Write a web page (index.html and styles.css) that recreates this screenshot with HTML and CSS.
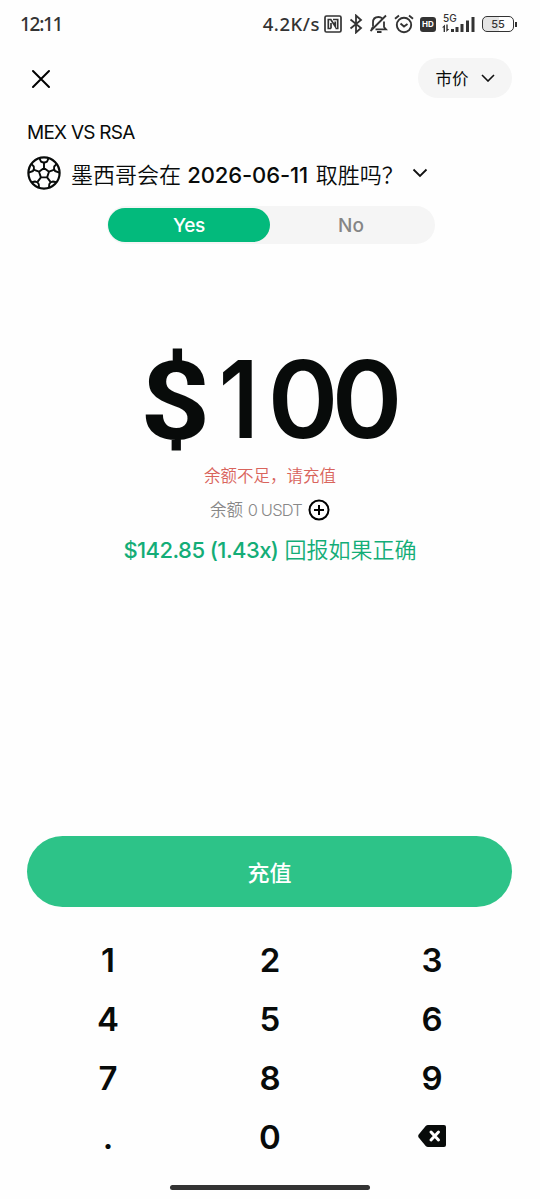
FILE: index.html
```html
<!DOCTYPE html>
<html lang="zh-CN">
<head>
<meta charset="utf-8">
<meta name="viewport" content="width=device-width">
<title>MEX VS RSA</title>
<link rel="stylesheet" href="styles.css">
</head>
<body>
<main class="screen">
  <header class="status">
    <span class="clock">12:11</span>
    <div class="indicators">
      <span class="speed">4.2K/s</span>
      <svg class="nfc" width="18" height="18" viewBox="0 0 18 18" fill="none" stroke="#333" stroke-width="1.7"><rect x="1" y="1" width="16" height="16" rx="1.500"/><path d="M7 13.500H4.300V4.500h2.500l4.400 6.800V6.500M7 8v5.500M9 4.500h4.700v9h-2.200"/></svg>
      <svg class="bt" width="14" height="20" viewBox="0 0 14 20" fill="none" stroke="#333" stroke-width="1.8"><path d="M1.500 5.500l10.500 8.500-5 4.500V1.500l5 4.500L1.500 14.500"/></svg>
      <svg class="mute" width="19" height="20" viewBox="0 0 19 20" fill="none" stroke="#333" stroke-width="1.8"><path d="M1.500 17L17 1.500M4 12.500V8.500C4 5 6 3 9.500 3c1.700 0 2.800.5 3.700 1.400M15 7.500v5.500l2 2.300H6.500M4 13l-1.500 2M8 18h4.500"/></svg>
      <svg class="alarm" width="20" height="20" viewBox="0 0 20 20" fill="none" stroke="#333" stroke-width="1.9"><circle cx="10" cy="11" r="7.200"/><path d="M1 4.700L5 1.500M19 4.700l-4-3.200M6.500 9.500L10 12.500l3.500-2.500"/></svg>
      <span class="hd">HD</span>
      <svg class="signal" width="34" height="20" viewBox="0 0 34 20" fill="#333"><text class="net" x="1" y="8">5G</text><path d="M0 13.500L3 10.500V18H1.600v-4.500zM4.300 10.500h1.400V15h1.600l-3 3zM9 15h3v3H9zM13.500 13h3v5h-3zM18.500 10h3v8h-3zM24 6.500h3V18h-3zM29.500 3h3v15h-3z"/></svg>
      <span class="battery"><b>55</b></span><i class="tip"></i>
    </div>
  </header>

  <nav class="top">
    <svg class="close" width="20" height="20" viewBox="0 0 20 20" fill="none" stroke="#000" stroke-width="2" stroke-linecap="round"><path d="M2 2l16 16M18 2L2 18"/></svg>
    <button class="order">市价<svg width="14" height="8" viewBox="0 0 14 8" fill="none" stroke="#111" stroke-width="1.600"><path d="M1 1l6 6 6-6"/></svg></button>
  </nav>

  <h2 class="match">MEX VS RSA</h2>
  <div class="question">
    <svg class="ball" width="34" height="34" viewBox="0 0 34 34" fill="none" stroke="#080b0a" stroke-width="1.900" stroke-linejoin="round"><circle cx="17" cy="17" r="15.600" stroke-width="2.200"/><path d="M17 12l5 3.700-1.900 5.700h-6.200L12 15.700zM17 12V6.500M22 15.700l5.500-2M20.100 21.400l3.400 4.500M13.900 21.400l-3.400 4.500M12 15.700l-5.500-2"/><path d="M12.500 2.400L14 5.700Q17 7.200 20 5.700L21.500 2.400M29.500 8.200l-2.300 2.300q-.7 2.300.800 4.500l4.300 1.700M29.200 26.200l-3.200-.7q-2.800.3-3.700 2.500L22 31.500M4.500 8.200l2.300 2.300q.7 2.300-.8 4.500l-4.300 1.700M4.800 26.200l3.200-.7q2.800.3 3.700 2.500l.3 3.500"/></svg>
    <h1>墨西哥会在 <span class="date">2026-06-11</span> 取胜吗？</h1>
    <svg class="chev" width="16" height="10" viewBox="0 0 16 10" fill="none" stroke="#111" stroke-width="1.800"><path d="M1.500 1.500L8 8l6.500-6.500"/></svg>
  </div>
  <div class="toggle"><button class="yes">Yes</button><button class="no">No</button></div>

  <section class="summary">
    <div class="amount"><span class="dollar">$</span><span class="one">1</span><span>0</span><span>0</span></div>
    <p class="error">余额不足，请充值</p>
    <div class="balance"><span>余额 <span class="usdt">0 USDT</span></span><svg width="22" height="22" viewBox="0 0 22 22" fill="none" stroke="#000" stroke-width="2"><circle cx="11" cy="11" r="9.500"/><path d="M6 11h10M11 6v10"/></svg></div>
    <p class="payout"><span class="sum">$142.85 (1.43x)</span> 回报如果正确</p>
  </section>

  <button class="deposit"><span>充值</span></button>
  <div class="keypad">
    <button>1</button><button>2</button><button>3</button>
    <button>4</button><button>5</button><button>6</button>
    <button>7</button><button>8</button><button>9</button>
    <button>.</button><button>0</button>
    <button aria-label="删除"><svg class="erase" width="28" height="22" viewBox="0 0 28 22"><path fill="#080b0a" d="M10 0h16q2 0 2 2v18q0 2-2 2H10q-1.300 0-2.300-1L.700 12.500q-1-1.500 0-3L7.700 1Q8.700 0 10 0z"/><path d="M13 7l7.500 8M20.500 7L13 15" stroke="#fff" stroke-width="3" stroke-linecap="round"/></svg></button>
  </div>
  <div class="home"></div>
</main>
</body>
</html>
```
FILE: styles.css
```css
* { box-sizing: border-box; margin: 0; padding: 0; }
body { background: #fefefe; font-family: Inter, "Noto Sans CJK SC", sans-serif; color: #080b0a; }
button { border: 0; background: none; font: inherit; color: inherit; }
svg { display: block; flex: none; }
.screen { width: 540px; height: 1199px; overflow: hidden; display: flex; flex-direction: column; }

.status { height: 48px; padding: 0 23px 0 20px; display: flex; align-items: center; justify-content: space-between; color: #333; }
.clock { font: 500 19px "Noto Sans", sans-serif; letter-spacing: -1.300px; }
.indicators { display: flex; align-items: center; }
.speed { font: 500 18.500px/24px "Noto Sans", sans-serif; letter-spacing: .55px; margin: 0 4px 0 0; }
.bt { margin-left: 7px; }
.mute { margin-left: 6px; }
.alarm { margin-left: 6px; }
.hd { width: 16px; height: 15px; margin-left: 6px; border-radius: 3px; background: #333; color: #fff; font: 700 8px/15px Inter, sans-serif; text-align: center; }
.signal { margin-left: 6px; overflow: visible; }
.net { font: 500 10px Inter, sans-serif; }
.battery { width: 32px; height: 16px; margin-left: 6px; border: 1.500px solid #333; border-radius: 5px; background: linear-gradient(90deg, #e4e4e4 55%, #fefefe 55%); display: flex; align-items: center; justify-content: center; }
.battery b { font: 500 11px/12px Inter, sans-serif; }
.tip { width: 2px; height: 5px; margin-left: 1px; background: #333; }

.top { height: 62px; padding: 0 28px 0 31px; display: flex; align-items: center; justify-content: space-between; }
.order { width: 94px; height: 40px; margin-top: -2px; border-radius: 20px; background: #f5f5f5; display: flex; align-items: center; justify-content: center; gap: 12px; font-size: 16.500px; }
.match { height: 24px; margin: 11px 0 0 27px; font-size: 19px; line-height: 24px; font-weight: 400; letter-spacing: -.75px; }
.question { height: 36px; margin-top: 10px; padding-left: 27px; display: flex; align-items: center; }
.question h1 { margin-left: 10px; padding-top: 3px; font-size: 22px; line-height: 36px; font-weight: 350; white-space: nowrap; }
.date { font-weight: 500; letter-spacing: -.1px; margin-right: 1.500px; }
.chev { margin-left: 8px; }
.toggle { width: 328px; height: 38px; margin: 15px 0 0 107px; padding: 2px 1px; border-radius: 19px; background: #f5f5f5; display: grid; grid-template-columns: 162px 1fr; font-size: 19px; }
.yes { border-radius: 17px; background: #03ba7c; color: #fff; font-weight: 500; letter-spacing: -.3px; }
.no { color: #858585; font-weight: 500; padding-right: 2px; }

.summary { height: 592px; padding-top: 90px; display: flex; flex-direction: column; align-items: center; }
.amount { height: 130px; display: grid; grid-template-columns: 65px 62px 64px 64px; justify-items: center; font-size: 107px; line-height: 130px; font-weight: 600; }
.dollar { padding-top: 3px; font-family: Roboto, sans-serif; font-size: 109px; font-weight: 700; transform: scaleX(1.12); }
.one { transform: scaleX(.88); }
.amount span:nth-child(n+3) { margin-left: 3px; }
.error { height: 24px; color: #d9645c; font-size: 16.500px; line-height: 25px; font-weight: 350; }
.balance { height: 24px; margin-top: 10px; display: flex; align-items: center; gap: 6px; color: #888; font-size: 16.500px; line-height: 24px; font-weight: 350; }
.usdt { letter-spacing: -.8px; }
.payout { height: 32px; margin-top: 12px; color: #13ad77; font-size: 22px; line-height: 32px; font-weight: 350; white-space: nowrap; }
.sum { font-weight: 500; letter-spacing: -.55px; }

.deposit { flex: none; height: 71px; margin: 0 28px 0 27px; padding-bottom: 2px; border-radius: 36px; background: #2dc388; color: #fff; font-size: 22px; font-weight: 500; }
.keypad { margin: 23px 27px 0; display: grid; grid-template-columns: repeat(3, 1fr); grid-auto-rows: 59px; }
.keypad button { display: flex; align-items: center; justify-content: center; font-size: 33px; font-weight: 600; }
.erase { margin-top: -2px; }
.home { width: 200px; height: 5px; margin: 19px 0 0 170px; border-radius: 3px; background: #333; }
```
